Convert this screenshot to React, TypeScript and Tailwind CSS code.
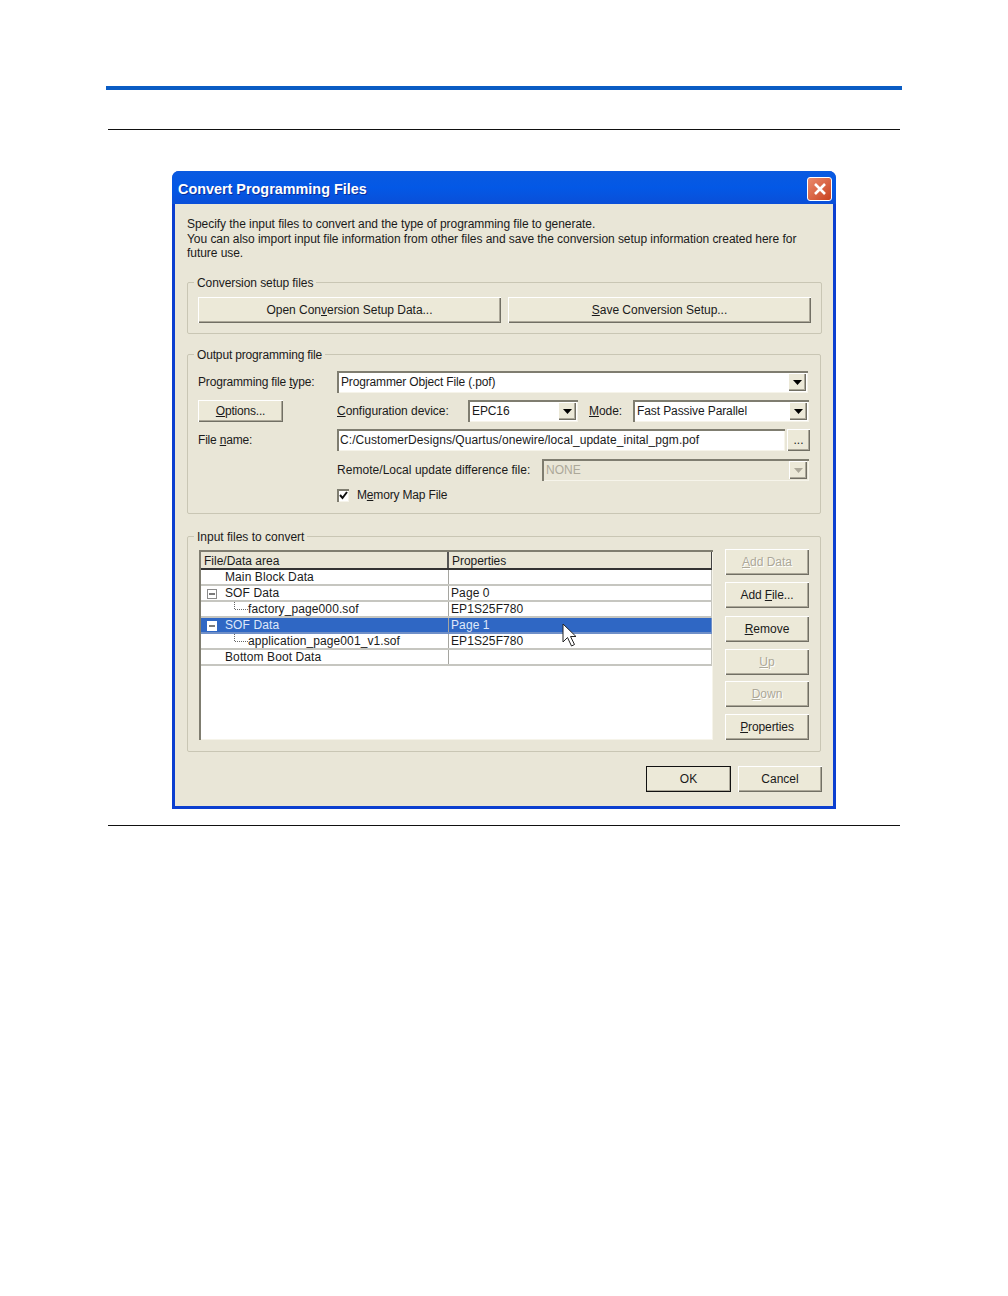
import React from "react";

const raised = "bg-[#ece9d8] shadow-[inset_1px_1px_0_#ffffff,inset_-1px_-1px_0_#716f64,inset_-2px_-2px_0_#aca899]";
const sunken = "shadow-[inset_2px_2px_0_#7f7d70,inset_-1px_-1px_0_#f6f4ea]";

function Btn({ className = "", disabled = false, children }: { className?: string; disabled?: boolean; children: React.ReactNode }) {
  return (
    <div className={`${raised} flex items-center justify-center shrink-0 ${disabled ? "text-[#aca899] [text-shadow:1px_1px_0_#ffffff]" : "text-[#1a1a1a]"} ${className}`}>
      <span>{children}</span>
    </div>
  );
}

function Arrow({ disabled = false }: { disabled?: boolean }) {
  return (
    <div className={`${raised} w-[18px] h-[18px] flex items-center justify-center shrink-0`}>
      <svg width="9" height="5" viewBox="0 0 9 5"><path d="M0 0h9L4.500 5z" fill={disabled ? "#aca899" : "#000000"} /></svg>
    </div>
  );
}

function Combo({ className = "", disabled = false, children }: { className?: string; disabled?: boolean; children: React.ReactNode }) {
  return (
    <div className={`${sunken} ${disabled ? "bg-[#e9e6d7] text-[#aca899]" : "bg-white text-[#1a1a1a]"} h-[22px] flex items-center justify-between pl-[4px] pr-[2px] shrink-0 ${className}`}>
      <span>{children}</span>
      <Arrow disabled={disabled} />
    </div>
  );
}

function Group({ title, className = "", legendClass = "", children }: { title: string; className?: string; legendClass?: string; children: React.ReactNode }) {
  return (
    <fieldset className={`border border-[#c9c6b4] rounded-[2px] ${className}`}>
      <legend className={`px-[3px] h-[14px] leading-[16px] text-[#1a1a1a] ${legendClass}`}>{title}</legend>
      {children}
    </fieldset>
  );
}

function Tree({ selected = false }: { selected?: boolean }) {
  return (
    <svg width="10" height="10" viewBox="0 0 10 10" className="absolute left-[6px] top-[3px]">
      <rect x="0.500" y="0.500" width="9" height="9" fill="#ffffff" stroke={selected ? "#ffffff" : "#8a8a8a"} />
      <path d="M2 5h6" stroke="#222222" strokeWidth="1.200" />
    </svg>
  );
}

function Elbow() {
  return (
    <svg width="14" height="11" viewBox="0 0 14 11" className="absolute left-[33px] top-[0px]">
      <path d="M0.500 0v7.500H14" stroke="#666666" fill="none" strokeDasharray="1 1" />
    </svg>
  );
}

type Row = { name: string; indent: string; prop: string; tree?: boolean; elbow?: boolean; selected?: boolean };
const rows: Row[] = [
  { name: "Main Block Data", indent: "pl-[24px]", prop: "" },
  { name: "SOF Data", indent: "pl-[24px]", prop: "Page 0", tree: true },
  { name: "factory_page000.sof", indent: "pl-[47px]", prop: "EP1S25F780", elbow: true },
  { name: "SOF Data", indent: "pl-[24px]", prop: "Page 1", tree: true, selected: true },
  { name: "application_page001_v1.sof", indent: "pl-[47px]", prop: "EP1S25F780", elbow: true },
  { name: "Bottom Boot Data", indent: "pl-[24px]", prop: "" },
];

export default function App() {
  return (
    <div className="w-[1008px] h-[1296px] bg-white overflow-hidden pt-[86px] text-[12px] leading-[14.5px] tracking-[0px] font-['Liberation_Sans',Arial,sans-serif]">
      <div className="ml-[106px] w-[796px] h-[4px] bg-[#0a5cc4]" />
      <div className="ml-[108px] mt-[39px] w-[792px] h-px bg-[#111111]" />

      <div className="ml-[172px] mt-[41px] w-[664px] h-[638px] rounded-t-[7px] bg-[#0b3fd0] p-[3px] pt-0 flex flex-col">
        <div className="-mx-[3px] h-[33px] shrink-0 rounded-t-[7px] bg-gradient-to-b from-[#0a5ae0] via-[#0358e6] to-[#0a4fd8] flex items-center justify-between pl-[6px] pr-[4px]">
          <span className="pt-[4px] font-bold text-[14.4px] text-white [text-shadow:1px_1px_0_#0b2f9c]">Convert Programming Files</span>
          <div className="mt-[2px] w-[25px] h-[24px] rounded-[3px] border border-white bg-gradient-to-br from-[#ea8a6c] to-[#c8401c] flex items-center justify-center">
            <svg width="14" height="14" viewBox="0 0 14 14"><path d="M2 2l10 10M12 2L2 12" stroke="#ffffff" strokeWidth="2.600" /></svg>
          </div>
        </div>

        <div className="flex-1 bg-[#e9e6d7] px-[12px] pt-[13px]">
          <p className="h-[44px] text-[#1a1a1a] tracking-[-0.05px] whitespace-nowrap">
            Specify the input files to convert and the type of programming file to generate.<br />
            You can also import input file information from other files and save the conversion setup information created here for<br />
            future use.
          </p>

          <Group title="Conversion setup files" legendClass="-ml-[4px] tracking-[-0.08px]" className="mt-[14px] px-[10px] pb-[10px]">
            <div className="pt-[8px] flex gap-[7px]">
              <Btn className="w-[303px] h-[26px] tracking-[-0.03px]">Open Con<u>v</u>ersion Setup Data...</Btn>
              <Btn className="w-[303px] h-[26px] tracking-[-0.03px]"><u>S</u>ave Conversion Setup...</Btn>
            </div>
          </Group>

          <Group title="Output programming file" legendClass="-ml-[4px] tracking-[-0.16px]" className="mt-[13px] px-[10px] pb-[11px]">
            <div className="pt-[10px] flex flex-col">
              <div className="flex items-center h-[22px]">
                <span className="w-[139px] text-[#1a1a1a] tracking-[-0.17px]">Programming file <u>t</u>ype:</span>
                <Combo className="w-[471px] tracking-[-0.15px]">Programmer Object File (.pof)</Combo>
              </div>
              <div className="flex items-center h-[22px] mt-[7px]">
                <Btn className="w-[85px] h-[22px] tracking-[-0.2px]"><u>O</u>ptions...</Btn>
                <span className="ml-[54px] w-[131px] text-[#1a1a1a] tracking-[-0.05px]"><u>C</u>onfiguration device:</span>
                <Combo className="w-[110px] tracking-[-0.1px]">EPC16</Combo>
                <span className="ml-[11px] w-[44px] text-[#1a1a1a] tracking-[-0.05px]"><u>M</u>ode:</span>
                <Combo className="w-[176px] tracking-[-0.1px]">Fast Passive Parallel</Combo>
              </div>
              <div className="flex items-center h-[22px] mt-[7px]">
                <span className="w-[139px] text-[#1a1a1a] tracking-[-0.2px]">File <u>n</u>ame:</span>
                <div className={`${sunken} bg-white w-[448px] h-[22px] flex items-center pl-[3px] text-[#1a1a1a] tracking-[0.07px]`}>C:/CustomerDesigns/Quartus/onewire/local_update_inital_pgm.pof</div>
                <Btn className="ml-[2px] w-[23px] h-[22px]">...</Btn>
              </div>
              <div className="flex items-center h-[22px] mt-[8px]">
                <span className="ml-[139px] w-[205px] text-[#1a1a1a] tracking-[0.04px]">Remote/Local update difference file:</span>
                <Combo disabled className="w-[267px]">NONE</Combo>
              </div>
              <div className="flex items-center h-[14px] mt-[7px] ml-[139px]">
                <div className={`${sunken} bg-white w-[12px] h-[13px] flex items-center justify-center`}>
                  <svg width="9" height="9" viewBox="0 0 9 9"><path d="M1 4l2.500 3L8 1" stroke="#111111" strokeWidth="2" fill="none" /></svg>
                </div>
                <span className="ml-[8px] text-[#1a1a1a] tracking-[-0.17px]">M<u>e</u>mory Map File</span>
              </div>
            </div>
          </Group>

          <Group title="Input files to convert" legendClass="-ml-[5px]" className="mt-[15px] px-[11px] pb-[11px]">
            <div className="pt-[6px] flex gap-[12px]">
              <div className="relative mt-[1px] w-[514px] h-[190px] bg-white shadow-[inset_2px_2px_0_#7f7d70,inset_-1px_-1px_0_#f6f4ea] pl-[2px] pt-[2px] pr-[1px] pb-[2px] text-[#1a1a1a] tracking-[0.1px]">
                <div className="flex h-[18px] bg-[#e9e6d7] border-b-2 border-[#333333] border-r border-r-[#444444]">
                  <div className="w-[248px] pl-[3px] pt-[2px] border-r-2 border-[#555555] flex items-center tracking-[0px]">File/Data area</div>
                  <div className="pl-[3px] pt-[2px] flex items-center tracking-[-0.05px]">Properties</div>
                </div>
                {rows.map((r, i) => (
                  <div key={i} className={`relative flex h-[16px] border-b-2 border-r ${r.selected ? "bg-[#2f67c4] border-[#6f8fc8] text-[#dfe8fa]" : "bg-white border-[#c6c6c0]"}`}>
                    {r.tree && <Tree selected={r.selected} />}
                    {r.elbow && <Elbow />}
                    <div className={`w-[248px] shrink-0 ${r.indent} border-r border-[#a5a5a0] h-[14px] leading-[15px]`}>{r.name}</div>
                    <div className="pl-[2px] h-[14px] leading-[15px]">{r.prop}</div>
                  </div>
                ))}
                <svg width="16" height="25" viewBox="0 0 16 25" className="absolute left-[363px] top-[73px]">
                  <path d="M1 1v18l4.500-4.500 4 8.500 3-1.500-4-8H14z" fill="#ffffff" stroke="#222222" strokeWidth="1" />
                </svg>
              </div>
              <div className="flex flex-col w-[84px]">
                <Btn disabled className="h-[26px] w-[84px]"><u>A</u>dd Data</Btn>
                <Btn className="h-[26px] w-[84px] mt-[7px] tracking-[-0.1px]">Add <u>F</u>ile...</Btn>
                <Btn className="h-[26px] w-[84px] mt-[8px]"><u>R</u>emove</Btn>
                <Btn disabled className="h-[26px] w-[84px] mt-[7px]"><u>U</u>p</Btn>
                <Btn disabled className="h-[26px] w-[84px] mt-[6px]"><u>D</u>own</Btn>
                <Btn className="h-[26px] w-[84px] mt-[7px] tracking-[-0.1px]"><u>P</u>roperties</Btn>
              </div>
            </div>
          </Group>

          <div className="mt-[14px] flex justify-end gap-[7px] -mr-[1px]">
            <Btn className="w-[85px] h-[26px] outline outline-1 -outline-offset-1 outline-[#111111]">OK</Btn>
            <Btn className="w-[84px] h-[26px]">Cancel</Btn>
          </div>
        </div>
      </div>

      <div className="ml-[108px] mt-[16px] w-[792px] h-px bg-[#111111]" />
    </div>
  );
}
